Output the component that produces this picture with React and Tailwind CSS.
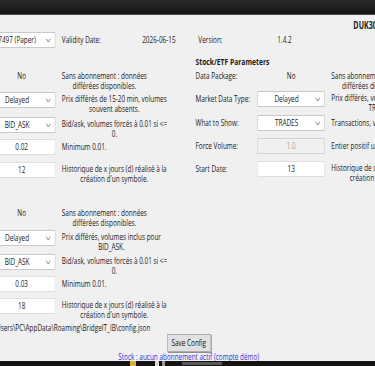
import React from 'react';

const Chevron = () => (
    <svg width="8" height="5" viewBox="0 0 8 5" className="block">
        <path d="M1 0.8 L4 4 L7 0.8" stroke="#777" strokeWidth="1" fill="none" />
    </svg>
);

function Select({ value }) {
    return (
        <div className="flex h-[16px] w-[95px] items-center border border-[#c9c9c9] bg-white">
            <span className="flex-1 text-center">{value}</span>
            <span className="pr-[5px]">
                <Chevron />
            </span>
        </div>
    );
}

function Input({ value, disabled }) {
    return (
        <div
            className={`flex h-[16px] w-[95px] items-center justify-center border ${
                disabled ? 'border-[#d2d2d2] bg-[#f0f0f0] text-[#a3a3a3]' : 'border-[#dedede] bg-white'
            }`}
        >
            {value}
        </div>
    );
}

function Desc({ lines }) {
    return (
        <div className="inline-block whitespace-nowrap text-center">
            {lines.map((l, i) => (
                <div key={i}>{l}</div>
            ))}
        </div>
    );
}

// one line of a parameter block: [label] control  description
function Row({ h, label, control, text, lines }) {
    const single = lines.length === 1;
    return (
        <div className="flex items-start" style={{ height: h }}>
            {label !== undefined && <div className="w-[87px] pt-[3px] whitespace-nowrap">{label}</div>}
            <div className="w-[95px] shrink-0">
                {control ? control : <div className="text-center">{text}</div>}
            </div>
            <div className={`ml-[9px] ${control ? (single ? 'pt-[3px]' : 'pt-[2px]') : ''}`}>
                <Desc lines={lines} />
            </div>
        </div>
    );
}

const noSub = ['Sans abonnement : données', 'différées disponibles.'];
const bidAsk = ['Bid/ask, volumes forcés à 0.01 si <=', '0.'];
const histo = ["Historique de x jours (d) réalisé à la", "création d'un symbole."];

export default function App() {
    return (
        <div
            className="flex h-[366px] w-full flex-col overflow-hidden bg-[#f0f0f0] text-[9px] leading-[10px] text-[#1a1a1a]"
            style={{ fontFamily: '"Open Sans", "Noto Sans", sans-serif' }}
        >
            {/* window title bar */}
            <div className="h-[15px] shrink-0 border-b border-[#4a4a4a] bg-gradient-to-b from-[#2a2a2a] to-[#161616]" />

            <div className="flex-1 overflow-hidden">
                <div className="w-[527px] origin-top-left scale-x-[0.711]">
                    <div className="-ml-[17px]">
                        {/* title */}
                        <div className="h-[17px] pl-[514px] pt-[5px] text-[10px] font-bold whitespace-nowrap">DUK3000</div>

                        {/* account / validity / version */}
                        <div className="flex h-[16px] items-center whitespace-nowrap">
                            <Select value="7497 (Paper)" />
                            <div className="ml-[9px] w-[113px]">Validity Date:</div>
                            <div className="w-[79px]">2026-06-15</div>
                            <div className="w-[111px]">Version:</div>
                            <div>1.4.2</div>
                        </div>

                        <div className="flex">
                            {/* crypto parameters */}
                            <div className="w-[292px] shrink-0 pt-[23px]">
                                <Row h={21} text="No" lines={noSub} />
                                <Row h={25} control={<Select value="Delayed" />} lines={['Prix différés de 15-20 min, volumes', 'souvent absents.']} />
                                <Row h={22} control={<Select value="BID_ASK" />} lines={bidAsk} />
                                <Row h={23} control={<Input value="0.02" />} lines={['Minimum 0.01.']} />
                                <Row h={46} control={<Input value="12" />} lines={histo} />

                                <Row h={22} text="No" lines={noSub} />
                                <Row h={24} control={<Select value="Delayed" />} lines={['Prix différés, volumes inclus pour', 'BID_ASK.']} />
                                <Row h={22} control={<Select value="BID_ASK" />} lines={bidAsk} />
                                <Row h={22} control={<Input value="0.03" />} lines={['Minimum 0.01.']} />
                                <Row h={25} control={<Input value="18" />} lines={histo} />
                            </div>

                            {/* stock / etf parameters */}
                            <div className="flex-1 pt-[9px]">
                                <div className="h-[14px] text-[9.5px] font-bold whitespace-nowrap">Stock/ETF Parameters</div>
                                <div className="flex h-[20px] items-start">
                                    <div className="w-[87px] whitespace-nowrap">Data Package:</div>
                                    <div className="w-[95px] text-center">No</div>
                                    <div className="ml-[9px]">
                                        <Desc lines={noSub} />
                                    </div>
                                </div>
                                <Row h={24} label="Market Data Type:" control={<Select value="Delayed" />} lines={['Prix différés, volumes inclus pour', 'TRADES.']} />
                                <Row h={23} label="What to Show:" control={<Select value="TRADES" />} lines={['Transactions, volumes réels.']} />
                                <Row h={23} label="Force Volume:" control={<Input value="1.0" disabled />} lines={['Entier positif uniquement.']} />
                                <Row h={24} label="Start Date:" control={<Input value="13" />} lines={histo} />
                            </div>
                        </div>

                        <div className="h-[11px] whitespace-nowrap">C:\Users\PC\AppData\Roaming\BridgeIT_IB\config.json</div>

                        <div className="flex w-[565px] flex-col items-center">
                            <button className="h-[18px] w-[62px] border border-[#adadad] bg-[#e1e1e1] shadow-[1px_1px_0_#8f8f8f] text-[9px] leading-[10px] text-[#111]">
                                Save Config
                            </button>
                            <div className="h-[9px] leading-[9px] whitespace-nowrap text-[#3434d0]">
                                Stock : aucun abonnement actif (compte démo)
                            </div>
                        </div>
                    </div>
                </div>
            </div>

            {/* taskbar strip */}
            <div className="flex h-[5px] shrink-0 items-center gap-[3px] bg-[#141414] pl-[130px]">
                <div className="h-[5px] w-[6px] bg-[#d9b13a]" />
                <div className="ml-[16px] h-[5px] w-[4px] bg-[#d8d8d8]" />
                <div className="h-[5px] w-[3px] bg-[#9a9a9a]" />
                <div className="ml-[14px] h-[3px] w-[40px] bg-[#5a5a5a]" />
            </div>
        </div>
    );
}
